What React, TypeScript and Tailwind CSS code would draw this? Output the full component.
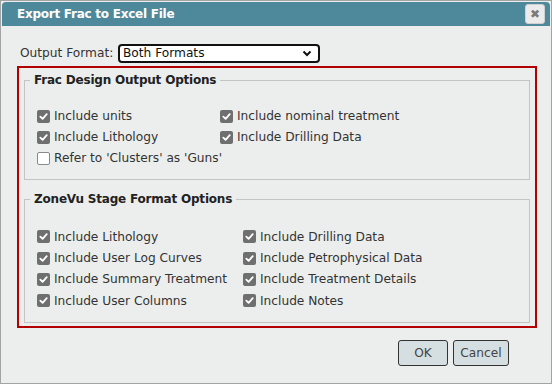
import React from "react";

const font = { fontFamily: '"DejaVu Sans", Verdana, sans-serif' };

function Box({ checked }: { checked: boolean }) {
  if (!checked)
    return <span className="inline-block w-[13px] h-[13px] rounded-[2px] border border-[#8a8a8a] bg-white shrink-0" />;
  return (
    <span className="inline-flex items-center justify-center w-[13px] h-[13px] rounded-[2px] bg-[#6f6f6f] shrink-0">
      <svg width="9" height="9" viewBox="0 0 10 10">
        <path d="M1.5 5.2 L4 7.6 L8.6 2.4" stroke="white" strokeWidth="2" fill="none" strokeLinecap="round" strokeLinejoin="round" />
      </svg>
    </span>
  );
}

function Item({ label, checked = true, h = "h-[21px]" }: { label: string; checked?: boolean; h?: string }) {
  return (
    <div className={`flex items-center gap-[4px] ${h} text-[12.2px] text-[#333] whitespace-nowrap`}>
      <Box checked={checked} />
      <span>{label}</span>
    </div>
  );
}

export default function App() {
  const h2 = "h-[21.4px]";
  return (
    <div style={font} className="w-[552px] h-[384px] border border-[#a3a3a3] bg-[#eceeed] p-[1px] flex flex-col">
      <div className="h-[24px] bg-[#4e899b] rounded-t-[4px] flex items-center justify-between pl-[15px] pr-[5px]">
        <span className="text-white font-bold text-[12px] tracking-[-0.25px]">Export Frac to Excel File</span>
        <span className="w-[20px] h-[20px] rounded-[3px] bg-[#ebebeb] border border-[#d0d0d0] flex items-center justify-center text-[#7a7a7a] text-[12px] font-bold leading-none">✖</span>
      </div>
      <div className="flex flex-col pl-[15px] pr-[14px]">
        <div className="flex items-center mt-[18px] h-[19px] text-[12.2px] text-[#333]">
          <span className="ml-[3px] w-[98px]">Output Format:</span>
          <div className="w-[202px] h-[19px] border-2 border-[#111] rounded-[4px] bg-white flex items-center justify-between pl-[3px] pr-[6px] text-[#111]">
            <span>Both Formats</span>
            <svg width="10" height="7" viewBox="0 0 10 7">
              <path d="M1.5 1.5 L5 5 L8.5 1.5" stroke="#111" strokeWidth="2" fill="none" />
            </svg>
          </div>
        </div>
        <div className="mt-[3px] w-[520px] h-[262px] border-2 border-[#b30000] px-[5px] pb-[2px] flex flex-col">
          <fieldset className="border border-[#c4c4c4] h-[108px] mt-[4px] px-[12px] pt-[18px]">
            <legend className="font-bold text-[12px] tracking-[-0.2px] text-[#222] px-[4px] ml-[-7px] leading-[16px]">Frac Design Output Options</legend>
            <div className="grid grid-cols-[183px_1fr]">
              <Item label="Include units" />
              <Item label="Include nominal treatment" />
              <Item label="Include Lithology" />
              <Item label="Include Drilling Data" />
              <Item label="Refer to 'Clusters' as 'Guns'" checked={false} />
            </div>
          </fieldset>
          <fieldset className="border border-[#c4c4c4] h-[132px] mt-[11px] px-[12px] pt-[19px]">
            <legend className="font-bold text-[12px] tracking-[-0.2px] text-[#222] px-[4px] ml-[-7px] leading-[16px]">ZoneVu Stage Format Options</legend>
            <div className="grid grid-cols-[206px_1fr]">
              <Item h={h2} label="Include Lithology" />
              <Item h={h2} label="Include Drilling Data" />
              <Item h={h2} label="Include User Log Curves" />
              <Item h={h2} label="Include Petrophysical Data" />
              <Item h={h2} label="Include Summary Treatment" />
              <Item h={h2} label="Include Treatment Details" />
              <Item h={h2} label="Include User Columns" />
              <Item h={h2} label="Include Notes" />
            </div>
          </fieldset>
        </div>
        <div className="flex justify-end gap-[5px] mt-[12px] pr-[27px]">
          <button className="w-[50px] h-[26px] rounded-[3px] border border-[#333] bg-[#d5dfe2] text-[12.2px] text-[#444]">OK</button>
          <button className="w-[56px] h-[26px] rounded-[3px] border border-[#333] bg-[#d5dfe2] text-[12.2px] text-[#444]">Cancel</button>
        </div>
      </div>
    </div>
  );
}
